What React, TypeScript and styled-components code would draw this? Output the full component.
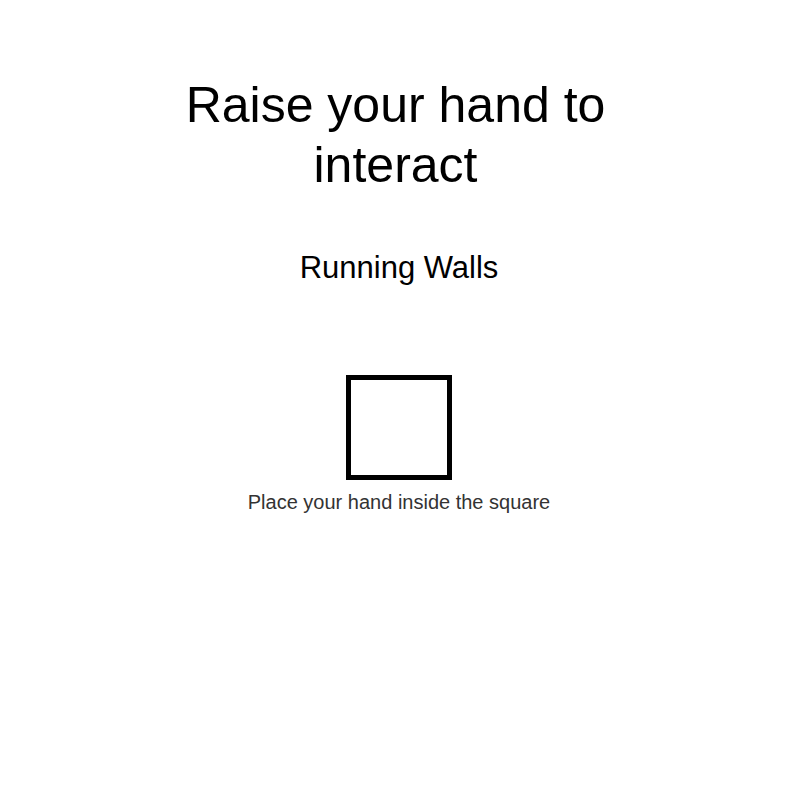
import React from "react";
import styled, { createGlobalStyle } from "styled-components";

const GlobalStyle = createGlobalStyle`
  html, body {
    margin: 0;
    padding: 0;
    background: #ffffff;
  }
  body {
    font-family: "Liberation Sans", Arial, sans-serif;
    color: #000000;
  }
`;

const Screen = styled.main`
  width: 800px;
  height: 800px;
  display: flex;
  flex-direction: column;
  align-items: center;
  padding: 75px 2px 0 0;
  box-sizing: border-box;
`;

const Title = styled.h1`
  margin: 0;
  width: 460px;
  padding-right: 7px;
  font-size: 50px;
  font-weight: 400;
  line-height: 60px;
  text-align: center;
  color: #000;
`;

const Subtitle = styled.h2`
  margin: 55px 0 0;
  font-size: 31px;
  font-weight: 400;
  line-height: 35px;
  color: #000;
`;

const Target = styled.div`
  margin-top: 90px;
  width: 106px;
  height: 105px;
  box-sizing: border-box;
  border: 5px solid #000;
`;

const Hint = styled.p`
  margin: 11px 0 0;
  font-size: 20px;
  line-height: 23px;
  color: #333;
`;

export default function App() {
  return (
    <>
      <GlobalStyle />
      <Screen>
        <Title>Raise your hand to interact</Title>
        <Subtitle>Running Walls</Subtitle>
        <Target />
        <Hint>Place your hand inside the square</Hint>
      </Screen>
    </>
  );
}
